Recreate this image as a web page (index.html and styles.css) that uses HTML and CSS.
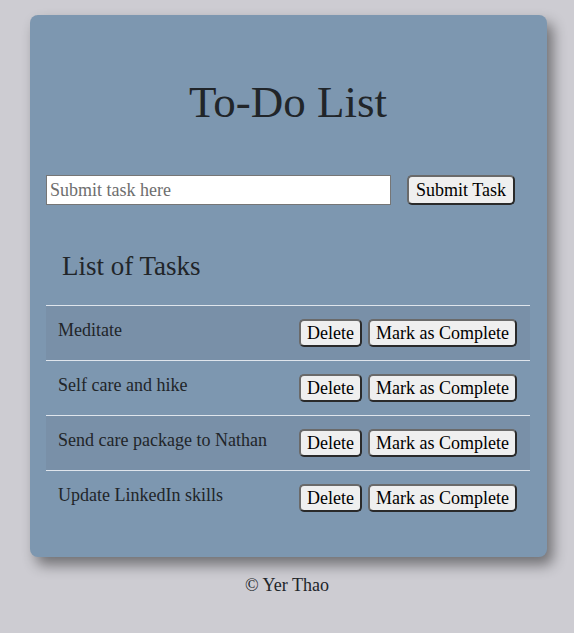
FILE: index.html
```html
<!DOCTYPE html>
<html lang="en">
<head>
<meta charset="utf-8">
<title>To-Do List</title>
<link rel="stylesheet" href="styles.css">
</head>
<body>
<main class="card">
  <h1 class="title">To-Do List</h1>
  <form class="entry" onsubmit="return false;">
    <input class="entry-input" type="text" placeholder="Submit task here">
    <button class="btn" type="submit">Submit Task</button>
  </form>
  <h2 class="subtitle">List of Tasks</h2>
  <ul class="tasks">
    <li class="task">
      <span class="task-name">Meditate</span>
      <div class="task-actions"><button class="btn">Delete</button><button class="btn">Mark as Complete</button></div>
    </li>
    <li class="task">
      <span class="task-name">Self care and hike</span>
      <div class="task-actions"><button class="btn">Delete</button><button class="btn">Mark as Complete</button></div>
    </li>
    <li class="task">
      <span class="task-name">Send care package to Nathan</span>
      <div class="task-actions"><button class="btn">Delete</button><button class="btn">Mark as Complete</button></div>
    </li>
    <li class="task">
      <span class="task-name">Update LinkedIn skills</span>
      <div class="task-actions"><button class="btn">Delete</button><button class="btn">Mark as Complete</button></div>
    </li>
  </ul>
</main>
<footer class="footer">© Yer Thao</footer>
</body>
</html>
```
FILE: styles.css
```css
* { box-sizing: border-box; }

body {
  margin: 0;
  background: #cdccd2;
  color: #212529;
  font-family: "Liberation Serif", "Times New Roman", serif;
  font-size: 18px;
  line-height: 27px;
}

.card {
  width: 517px;
  margin: 15px 0 0 30px;
  padding: 61px 17px 32px 16px;
  background: #7d97b0;
  border-radius: 8px;
  box-shadow: 6px 8px 14px rgba(0, 0, 0, 0.45);
}

.title {
  margin: 0;
  text-align: center;
  font-size: 45px;
  line-height: 53px;
  font-weight: 400;
}

.entry {
  display: flex;
  align-items: flex-start;
  gap: 16px;
  margin: 46px 0 0;
}

.entry-input {
  width: 345px;
  height: 30px;
  padding: 0 3px;
  border: 1px solid #767676;
  background: #fff;
  font: inherit;
  font-size: 18px;
  color: #212529;
}

.entry-input::placeholder { color: #6e6e6e; }

.btn {
  height: 28px;
  padding: 0 6px;
  border: 2px solid;
  border-color: #6a6a6a #2a2a2a #2a2a2a #6a6a6a;
  border-radius: 5px;
  background: #efefef;
  color: #000;
  font: inherit;
  font-size: 18px;
  line-height: 24px;
}

.entry .btn {
  height: 30px;
  padding: 0 7px;
}

.subtitle {
  margin: 46px 0 0;
  padding-left: 16px;
  font-size: 27px;
  line-height: 31px;
  font-weight: 400;
}

.tasks {
  list-style: none;
  margin: 23px 0 0;
  padding: 0;
}

.task {
  display: flex;
  justify-content: space-between;
  align-items: flex-start;
  padding: 11px 13px 13px 12px;
  border-top: 1px solid #dfe5ec;
}

.task:nth-child(odd) { background: #7990a8; }

.task-actions {
  display: flex;
  gap: 6px;
  margin-top: 2px;
}

.footer {
  margin-top: 15px;
  text-align: center;
}
```
